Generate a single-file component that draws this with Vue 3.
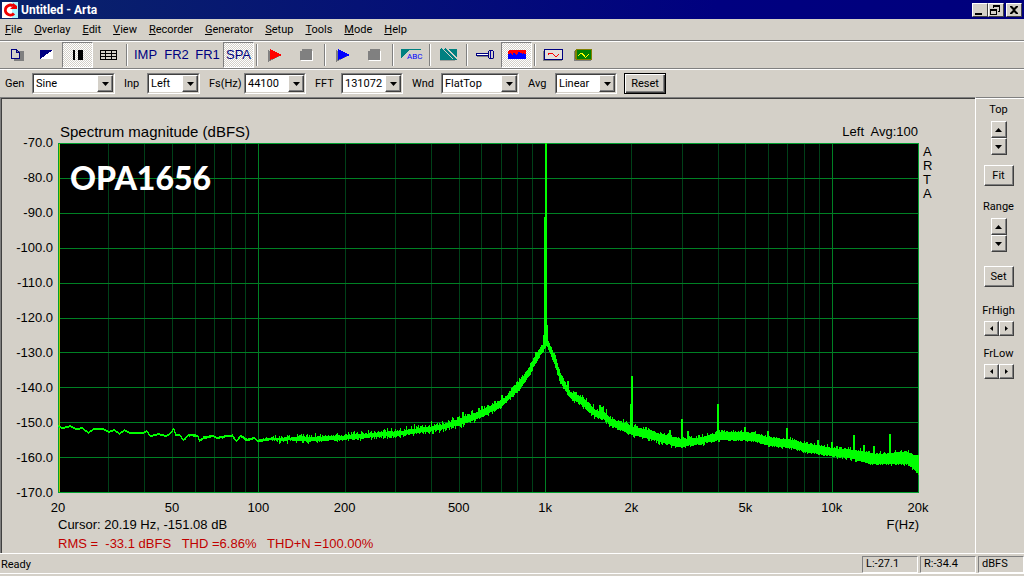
<script setup>
const menus = ['File', 'Overlay', 'Edit', 'View', 'Recorder', 'Generator', 'Setup', 'Tools', 'Mode', 'Help']

const tools = [
  { id: 'copy', name: 'Copy' },
  { id: 'mono', name: 'Black and white background' },
  { id: 'bars', name: 'Pause', on: true },
  { id: 'table', name: 'Grid' },
  { id: 'sep' },
  { id: 'IMP', text: 'IMP' },
  { id: 'FR2', text: 'FR2' },
  { id: 'FR1', text: 'FR1' },
  { id: 'SPA', text: 'SPA', on: true },
  { id: 'sep' },
  { id: 'play', name: 'Record', color: '#ff0000' },
  { id: 'stop', name: 'Stop recording' },
  { id: 'sep' },
  { id: 'play', name: 'Generate', color: '#0000ff' },
  { id: 'stop', name: 'Stop generator' },
  { id: 'sep' },
  { id: 'abc', name: 'Title' },
  { id: 'sep' },
  { id: 'hatch', name: 'Calibrate' },
  { id: 'sep' },
  { id: 'probe', name: 'Probe' },
  { id: 'fill', name: 'Spectrum setup', on: true },
  { id: 'sep' },
  { id: 'wave', name: 'Time record' },
  { id: 'scope', name: 'Scope' },
]

const fields = [
  { id: 'gen', label: 'Gen', value: 'Sine' },
  { id: 'inp', label: 'Inp', value: 'Left' },
  { id: 'fs', label: 'Fs(Hz)', value: '44100' },
  { id: 'fft', label: 'FFT', value: '131072' },
  { id: 'wnd', label: 'Wnd', value: 'FlatTop' },
  { id: 'avg', label: 'Avg', value: 'Linear' },
]

const levels = ['-70.0', '-80.0', '-90.0', '-100.0', '-110.0', '-120.0', '-130.0', '-140.0', '-150.0', '-160.0', '-170.0']
const W = 861
const H = 350
const fx = (f) => (Math.log10(f / 20) / 3) * (W - 1)
const ticks = [[20, '20'], [50, '50'], [100, '100'], [200, '200'], [500, '500'], [1000, '1k'], [2000, '2k'], [5000, '5k'], [10000, '10k'], [20000, '20k']]
const minor = []
for (const d of [10, 100, 1000, 10000]) {
  for (let k = 2; k < 10; k++) {
    const f = d * k
    if (f > 20 && f < 20000) minor.push(Math.round(fx(f)) + 0.5)
  }
}
const major = [100, 1000, 10000].map((f) => Math.round(fx(f)) + 0.5)
const rows = [1, 2, 3, 4, 5, 6, 7, 8, 9].map((n) => Math.round(n * 34.9) + 0.5)

// Trace anchors: x, centre, half thickness, jitter
const anchors = [
  [0, 283, 1, 0], [4, 285, 1, 0], [12, 283, 1, 0], [18, 286, 1, 0], [24, 285, 1, 0], [30, 290, 1, 0], [35, 286, 1, 0],
  [45, 286, 1, 0], [50, 289, 1, 0], [56, 287, 1, 0], [61, 291, 1, 0], [66, 287, 1, 0], [72, 290, 1, 0], [84, 290, 1, 0],
  [88, 288, 1, 0], [92, 293, 1, 0], [100, 291, 1, 0], [108, 293, 1, 0], [112, 290, 1, 0], [115, 286, 1, 0], [117, 292, 1, 0],
  [121, 292, 1, 0], [125, 297, 1, 1], [130, 292, 1, 1], [139, 293, 1, 1], [141, 298, 1, 1], [145, 295, 1, 1], [154, 293, 1, 1],
  [159, 295, 1, 1], [169, 293, 1, 1], [174, 293, 1, 1], [178, 298, 1, 1], [182, 293, 1, 1], [189, 297, 1, 1], [196, 295, 1, 1],
  [199, 298, 1, 1], [212, 296, 1, 3], [220, 296, 1, 5], [250, 296, 2, 5], [282, 295, 2, 4], [315, 292, 2, 5], [342, 290, 2, 5],
  [365, 287, 2, 6], [382, 284, 2, 6], [402, 279, 3, 6], [422, 271, 3, 6], [432, 266, 3, 5], [444, 260, 3, 4], [452, 252, 3, 5], [459, 244, 4, 5],
  [465, 237, 4, 4], [472, 227, 4, 3], [477, 216, 4, 4], [482, 208, 4, 4], [485, 205, 4, 1], [486, 196, 5, 0],
  [489, 200, 4, 1], [492, 207, 4, 4], [495, 214, 4, 4], [499, 225, 5, 4], [502, 235, 4, 3], [507, 244, 4, 3], [512, 252, 3, 4],
  [522, 257, 3, 5], [530, 264, 4, 6], [537, 271, 3, 6], [545, 272, 4, 6], [552, 279, 3, 5], [562, 283, 4, 5], [575, 288, 4, 5],
  [589, 291, 4, 5], [602, 295, 4, 5], [622, 300, 4, 3], [639, 298, 3, 4], [649, 296, 3, 4], [662, 293, 4, 3], [679, 293, 4, 3],
  [695, 294, 4, 3], [709, 298, 4, 3], [722, 300, 4, 3], [735, 301, 4, 3], [747, 305, 4, 3], [762, 307, 4, 4], [775, 309, 4, 5],
  [792, 311, 4, 5], [802, 313, 5, 4], [815, 316, 5, 3], [829, 316, 5, 3], [842, 315, 6, 3], [849, 315, 6, 3], [855, 319, 7, 3], [860, 322, 9, 2],
]

const trace = (() => {
  let seed = 1656
  const rnd = () => ((seed = (seed * 16807) % 2147483647) / 2147483647)
  let i = 0
  let last = anchors[0][1]
  let d = ''
  for (let x = 0; x < W; x++) {
    while (i < anchors.length - 2 && anchors[i + 1][0] <= x) i++
    const a = anchors[i]
    const b = anchors[i + 1]
    const t = (x - a[0]) / (b[0] - a[0])
    const [c, h, j] = [1, 2, 3].map((k) => a[k] + (b[k] - a[k]) * t)
    const top = Math.min(Math.round(c - h - rnd() * rnd() * j), Math.round(last))
    const bottom = Math.max(Math.round(c + h + rnd() * rnd() * j * 0.8), Math.round(last), top + 2)
    d += `M${x + 0.5} ${top}V${bottom}`
    last = c
  }
  return d
})()

// Harmonics and stray peaks: x, top, bottom
const peaks = [
  [405, 269, 280], [437, 258, 266], [444, 252, 262], [510, 238, 252], [542, 262, 272], [544, 264, 273],
  [574, 233, 290], [573, 261, 290], [624, 276, 300], [630, 288, 298], [612, 287, 297], [660, 261, 293], [687, 284, 292],
  [710, 288, 297], [729, 285, 300], [760, 297, 306], [774, 299, 308], [796, 292, 312], [806, 302, 313], [816, 303, 315], [832, 291, 316],
].map(([x, a, b]) => `M${x} ${a}V${b}`).join('')
</script>

<template>
  <div class="app">
    <header class="titlebar">
      <svg class="logo" viewBox="0 0 16 16" width="16" height="16" aria-hidden="true">
        <rect width="16" height="16" fill="#fff" />
        <path d="M10 0h6v16h-6z" fill="#a8f4ff" />
        <path d="M12 11.5A5 5 0 1 1 11 3.8" fill="none" stroke="#f00000" stroke-width="3" />
        <path d="M8 7h7V4l-4-3v3z" fill="#f00000" />
      </svg>
      <h1>Untitled - Arta</h1>
      <div class="winbtns">
        <button aria-label="Minimize"><svg width="14" height="12" viewBox="0 0 14 12"><path d="M2 9h7v2H2z" /></svg></button>
        <button aria-label="Restore"><svg width="14" height="12" viewBox="0 0 14 12"><path d="M4 1h7v7H9V7h1V3H5v1H4zM1 5h7v6H1zM2 7v3h5V7z" fill-rule="evenodd" /></svg></button>
        <button class="close" aria-label="Close"><svg width="14" height="12" viewBox="0 0 14 12"><path d="M3 2h2l2 2 2-2h2v1L8 6l3 3v1H9L7 8l-2 2H3V9l3-3-3-3z" /></svg></button>
      </div>
    </header>

    <nav class="menubar">
      <button v-for="m in menus" :key="m"><u>{{ m[0] }}</u>{{ m.slice(1) }}</button>
    </nav>

    <div class="toolbar" role="toolbar">
      <template v-for="(t, n) in tools" :key="n">
        <span v-if="t.id === 'sep'" class="sep"></span>
        <button v-else :class="{ on: t.on }" :aria-label="t.name">
          <span v-if="t.text">{{ t.text }}</span>
          <svg v-else width="24" height="16" viewBox="0 0 24 16" shape-rendering="crispEdges">
            <g v-if="t.id === 'copy'">
              <path d="M10 4h10v10H10z" fill="#808080" />
              <path d="M7.500 2.500h5l3 3v6h-8zM12.500 2.500v3h3" fill="#d4d0c8" stroke="#000080" />
            </g>
            <g v-else-if="t.id === 'mono'">
              <path d="M5 3h13L5 12z" fill="#000080" />
              <path d="M18 3v9H5z" fill="#fff" />
            </g>
            <g v-else-if="t.id === 'bars'">
              <path d="M7 3h2v10H7zM12 3h5v10h-5z" fill="#000" />
            </g>
            <path v-else-if="t.id === 'table'" d="M3.500 3.500h16v9h-16zM3 6.500h16M3 9.500h16M8.500 3v10M14.500 3v10" fill="none" stroke="#000" />
            <g v-else-if="t.id === 'play'">
              <path d="M4 3v12l12-6z" fill="#808080" />
              <path d="M6 2v11l12-5z" :fill="t.color" />
            </g>
            <g v-else-if="t.id === 'stop'">
              <path d="M6 4h12v10H6z" fill="#fff" />
              <path d="M7 2h10v11H5V4h2z" fill="#808080" />
            </g>
            <g v-else-if="t.id === 'abc'">
              <path d="M1 2h20v1H9L1 11z" fill="#008080" />
              <text x="7" y="12" font-size="8" fill="#0000ff">ABC</text>
            </g>
            <g v-else-if="t.id === 'hatch'">
              <path d="M3 4h15v10H3z" fill="#a0a09c" />
              <path d="M3 2h17v11H3z" fill="#d4d0c8" />
              <path d="M3 3v10h10zM12 2h8v9z" fill="#008080" />
              <path d="M4 2l11 11M8 2l11 11" stroke="#008080" stroke-width="2" />
              <path d="M3.500 12.500h16" stroke="#008080" />
            </g>
            <g v-else-if="t.id === 'probe'">
              <path d="M3 9h12v1H3zM15 11h5v1h-5z" fill="#808080" />
              <path d="M2.500 6.500h12v2h-12z" fill="#fff" stroke="#000080" />
              <path d="M14.500 4.500l1-1h3l1 1v6l-1 1h-3l-1-1z" fill="#d4d0c8" stroke="#000080" />
              <path d="M16 4h1v7h-1z" fill="#0000a0" />
            </g>
            <g v-else-if="t.id === 'fill'">
              <path d="M4 3h16l1 1v4H3V4z" fill="#ff0000" />
              <path d="M3 7h2V6h1v1h1v1h1V6h2v1h1v1h1V7h1V5h2v1h2v1h1V6h1v1h2v5H3z" fill="#0000ff" />
            </g>
            <g v-else-if="t.id === 'wave'">
              <path d="M1 4h19v10H1z" fill="#808080" />
              <path d="M2.500 2.500h18v10h-18z" fill="#e4e0da" stroke="#000080" />
              <path d="M6 8V7l2-1h2l3 3h2l2-2" fill="none" stroke="#ff0000" />
            </g>
            <g v-else>
              <path d="M1 4h17v10H1z" fill="#808080" />
              <path d="M3 2h15l1 1v9l-1 1H3l-1-1V3z" fill="#808000" />
              <path d="M4 3h14v9H4z" fill="#008000" />
              <path d="M5 9l3-3h1l3 4h1l3-3" fill="none" stroke="#ffff00" />
            </g>
          </svg>
        </button>
      </template>
    </div>

    <form class="fields" @submit.prevent>
      <template v-for="f in fields" :key="f.id">
        <label :for="f.id">{{ f.label }}</label>
        <span class="combo">
          <select :id="f.id"><option>{{ f.value }}</option></select>
          <i aria-hidden="true"><svg width="7" height="4" viewBox="0 0 7 4"><path d="M0 0h7L3.500 4z" /></svg></i>
        </span>
      </template>
      <button type="button" class="reset">Reset</button>
    </form>

    <main class="work">
      <section class="chart">
        <div class="head"><h2>Spectrum magnitude (dBFS)</h2><pre>Left  Avg:100</pre></div>
        <div class="ylabels"><span v-for="l in levels" :key="l">{{ l }}</span></div>
        <div class="plot">
          <svg :viewBox="`0 0 ${W} ${H}`" preserveAspectRatio="none" shape-rendering="crispEdges" role="img" aria-label="Spectrum magnitude">
            <rect :width="W" :height="H" fill="#000" />
            <path v-for="x in minor" :key="x" :d="`M${x} 0V${H}`" stroke="#004018" />
            <path v-for="y in rows" :key="y" :d="`M0 ${y}H${W}`" stroke="#008024" />
            <path v-for="x in major" :key="x" :d="`M${x} 0V${H}`" stroke="#008024" />
            <path d="M.5 .5h860v349H.5z" fill="none" stroke="#00a030" />
            <path d="M1.500 1v348" stroke="#b0c000" />
            <g stroke="#00ff00">
              <path :d="trace" />
              <path :d="peaks" stroke-width="2" />
              <path d="M487.500 0V205" />
              <path d="M488.500 0V200M486.500 74V206" />
              <path d="M489.500 182V204M485.500 192V208" />
            </g>
          </svg>
          <strong>OPA1656</strong>
        </div>
        <div class="brand"><span v-for="(c, n) in 'ARTA'" :key="n">{{ c }}</span></div>
        <div class="xlabels">
          <span v-for="[f, l] in ticks" :key="l" :style="{ left: (fx(f) / W) * 100 + '%' }">{{ l }}</span>
        </div>
        <div class="readout"><span>Cursor: 20.19 Hz, -151.08 dB</span><span>F(Hz)</span></div>
        <pre class="rms">RMS =  -33.1 dBFS   THD =6.86%   THD+N =100.00%</pre>
      </section>

      <aside class="side">
        <p>Top</p>
        <div class="spin">
          <button aria-label="Top up"><svg width="7" height="4" viewBox="0 0 7 4"><path d="M0 4h7L3.500 0z" /></svg></button>
          <button aria-label="Top down"><svg width="7" height="4" viewBox="0 0 7 4"><path d="M0 0h7L3.500 4z" /></svg></button>
        </div>
        <button class="push">Fit</button>
        <p>Range</p>
        <div class="spin">
          <button aria-label="Range up"><svg width="7" height="4" viewBox="0 0 7 4"><path d="M0 4h7L3.500 0z" /></svg></button>
          <button aria-label="Range down"><svg width="7" height="4" viewBox="0 0 7 4"><path d="M0 0h7L3.500 4z" /></svg></button>
        </div>
        <button class="push">Set</button>
        <template v-for="l in ['FrHigh', 'FrLow']" :key="l">
          <p class="low">{{ l }}</p>
          <div class="pair">
            <button :aria-label="l + ' down'"><svg width="3" height="5" viewBox="0 0 3 5"><path d="M3 0v5L0 2.500z" /></svg></button>
            <button :aria-label="l + ' up'"><svg width="3" height="5" viewBox="0 0 3 5"><path d="M0 0v5l3-2.500z" /></svg></button>
          </div>
        </template>
      </aside>
    </main>

    <footer class="status">
      <span class="ready">Ready</span>
      <span class="cell">L:-27.1</span>
      <span class="cell">R:-34.4</span>
      <span class="cell last">dBFS</span>
    </footer>
  </div>
</template>

<style>
body {
  background: #d4d0c8;
}
</style>

<style scoped>
.app {
  display: flex;
  flex-direction: column;
  min-height: 100vh;
  background: #d4d0c8;
  color: #000;
  font: 11px/14px Roboto, "Liberation Sans", sans-serif;
}
.app * {
  box-sizing: border-box;
}
h1, h2, p, pre {
  margin: 0;
  font: inherit;
}
button, select {
  font: inherit;
  color: inherit;
  margin: 0;
  padding: 0;
  border: 0;
  border-radius: 0;
  background: #d4d0c8;
}
svg {
  display: block;
}
.titlebar {
  display: flex;
  align-items: center;
  height: 19px;
  padding: 0 2px;
  gap: 3px;
  background: linear-gradient(90deg, #0a246a, #000080 70%, #00007c);
  color: #fff;
}
h1 {
  flex: 1;
  font-size: 12px;
  font-weight: 700;
}
.winbtns {
  display: flex;
}
.winbtns button {
  display: grid;
  place-items: center;
  width: 16px;
  height: 14px;
  border: 1px solid;
  border-color: #fff #404040 #404040 #fff;
  color: #000;
}
.winbtns .close {
  margin-left: 2px;
}
.menubar {
  display: flex;
  align-items: center;
  gap: 12px;
  height: 21px;
  padding: 0 5px;
}
.menubar button {
  height: 14px;
}
.toolbar {
  display: flex;
  height: 29px;
  border-top: 1px solid #808080;
  border-bottom: 1px solid #808080;
  box-shadow: inset 0 1px #fff;
  padding-top: 1px;
}
.toolbar button {
  display: grid;
  place-items: center;
  width: 31px;
  height: 26px;
  border: 1px solid transparent;
  background: none;
  color: #000080;
  font: 13px/16px "Liberation Sans", sans-serif;
}
.toolbar button svg {
  justify-self: start;
  margin-left: 3px;
}
.toolbar .on {
  border-color: #808080 #fff #fff #808080;
  background: repeating-conic-gradient(#fff 0 25%, #d4d0c8 0 50%) 0 0 / 2px 2px;
}
.toolbar text {
  font-family: Roboto, sans-serif;
}
.sep {
  width: 6px;
  padding: 2px;
}
.sep::before {
  content: "";
  display: block;
  height: 22px;
  border-left: 1px solid #808080;
  border-right: 1px solid #fff;
}
.fields {
  display: grid;
  grid-template-columns: 27px 83px 32px 53px 44px 62px 35px 62px 38px 78px 36px 62px 42px;
  align-items: center;
  height: 28px;
  padding-left: 5px;
  border-top: 1px solid #fff;
}
.fields label {
  padding-left: 9px;
}
.fields label:first-child {
  padding-left: 0;
}
.combo {
  position: relative;
  height: 21px;
  border: 1px solid;
  border-color: #808080 #fff #fff #808080;
}
.combo select {
  appearance: none;
  display: block;
  width: 100%;
  height: 19px;
  padding-left: 2px;
  border: 1px solid;
  border-color: #404040 #d4d0c8 #d4d0c8 #404040;
  background: #fff;
}
.combo i {
  position: absolute;
  top: 1px;
  right: 1px;
  bottom: 1px;
  width: 16px;
  display: grid;
  place-items: center;
  background: #d4d0c8;
  pointer-events: none;
}
.combo i, .spin button, .pair button, .push {
  border: 1px solid;
  border-color: #fff #404040 #404040 #fff;
  box-shadow: inset -1px -1px #808080;
}
.reset {
  height: 21px;
  margin-left: 7px;
  width: 42px;
  border: 1px solid #000;
  box-shadow: inset 1px 1px #fff, inset -1px -1px #404040, inset -2px -2px #808080;
}
.work {
  flex: 1;
  display: flex;
}
.chart {
  flex: 1;
  display: grid;
  grid-template-columns: 56px 1fr 56px;
  grid-template-rows: 44px 1fr 24px 16px 20px;
  border-top: 1px solid #808080;
  border-left: 1px solid #808080;
  box-shadow: inset 1px 1px #404040;
  padding: 1px 0 0 1px;
  font: 13px/16px "Liberation Sans", sans-serif;
}
.chart .head {
  grid-column: 2;
  display: flex;
  align-items: flex-end;
  justify-content: space-between;
  padding: 0 1px 3px 2px;
}
.head h2 {
  font-size: 15px;
}
.ylabels {
  grid-column: 1;
  display: flex;
  flex-direction: column;
  justify-content: space-between;
  align-items: flex-end;
  margin: -8px 0;
  padding-right: 5px;
}
.plot {
  position: relative;
  min-height: 200px;
}
.plot svg {
  position: absolute;
  width: 100%;
  height: 100%;
}
.plot strong {
  position: absolute;
  left: 12px;
  top: 16px;
  color: #fff;
  font: 900 32px/38px Lato, "Open Sans", sans-serif;
}
.brand {
  display: flex;
  flex-direction: column;
  padding: 2px 0 0 4px;
  line-height: 14px;
}
.xlabels {
  grid-column: 2;
  position: relative;
}
.xlabels span {
  position: absolute;
  top: 7px;
  transform: translateX(-50%);
}
.readout {
  grid-column: 2;
  display: flex;
  justify-content: space-between;
}
.rms {
  grid-column: 2;
  padding-top: 3px;
  color: #c00000;
}
.side {
  display: flex;
  flex-direction: column;
  align-items: center;
  width: 49px;
  padding: 5px 3px 0 0;
  border-top: 1px solid #808080;
  border-left: 1px solid #fff;
  box-shadow: inset 0 1px #fff;
}
.side p {
  height: 18px;
}
.side .low {
  height: 17px;
}
.spin {
  display: flex;
  flex-direction: column;
  margin-bottom: 10px;
}
.spin button, .pair button {
  display: grid;
  place-items: center;
  width: 16px;
  height: 17px;
}
.push {
  width: 30px;
  height: 21px;
  margin-bottom: 14px;
}
.push ~ .push {
  margin-bottom: 17px;
}
.push + p + .spin {
  margin-bottom: 14px;
}
.pair {
  display: flex;
  margin-bottom: 11px;
}
.pair button {
  width: 15px;
  height: 15px;
}
.status {
  display: flex;
  align-items: flex-start;
  height: 23px;
  padding: 2px 0;
  gap: 2px;
  border-top: 1px solid #fff;
  box-shadow: inset 0 -2px #d4d0c8, inset 0 -3px #fff;
}
.ready {
  flex: 1;
  padding: 2px 1px;
}
.cell {
  width: 56px;
  height: 17px;
  padding: 0 3px;
  border: 1px solid;
  border-color: #808080 #fff #fff #808080;
}
.last {
  width: 46px;
}
</style>
